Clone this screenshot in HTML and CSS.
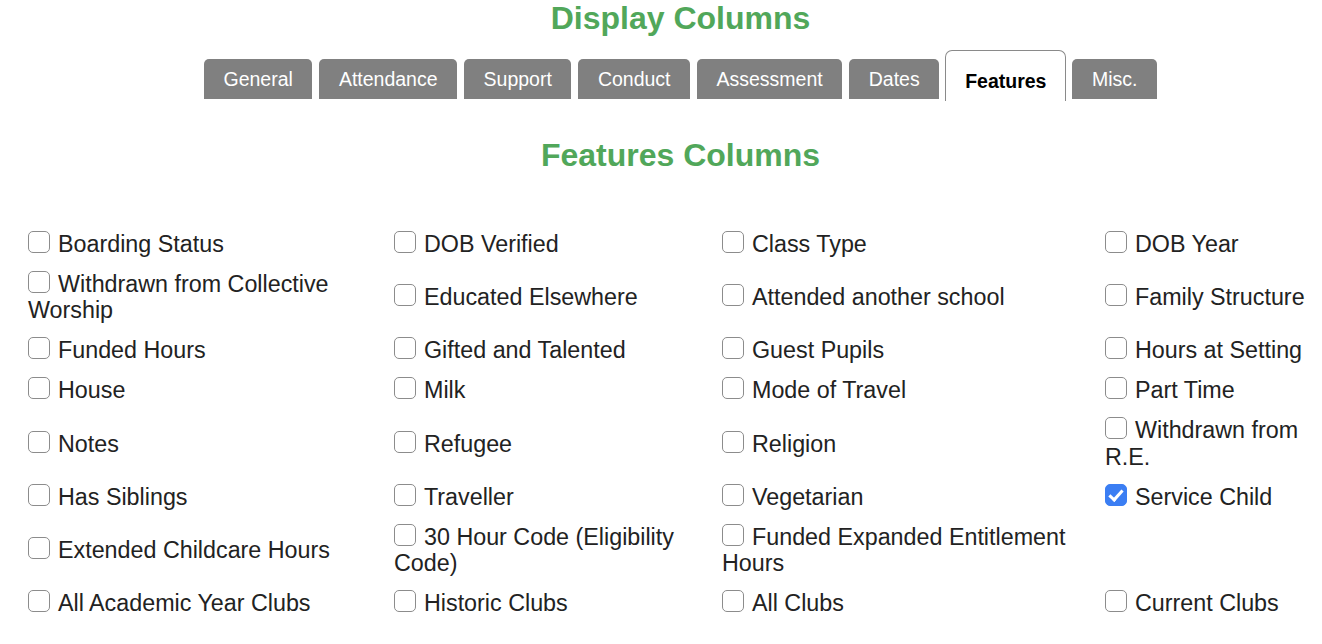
FILE: index.html
```html
<!DOCTYPE html>
<html lang="en">
<head>
<meta charset="utf-8">
<title>Display Columns</title>
<link rel="stylesheet" href="styles.css">
</head>
<body>
<div class="header">
  <h1 class="title">Display Columns</h1>
  <div class="tabs">
    <div class="tab">General</div>
    <div class="tab">Attendance</div>
    <div class="tab">Support</div>
    <div class="tab">Conduct</div>
    <div class="tab">Assessment</div>
    <div class="tab">Dates</div>
    <div class="tab active">Features</div>
    <div class="tab">Misc.</div>
  </div>
  <h2 class="title sub">Features Columns</h2>
</div>
<div class="grid">
  <label class="opt"><input type="checkbox" class="cb">Boarding Status</label>
  <label class="opt"><input type="checkbox" class="cb">DOB Verified</label>
  <label class="opt"><input type="checkbox" class="cb">Class Type</label>
  <label class="opt"><input type="checkbox" class="cb">DOB Year</label>

  <label class="opt"><input type="checkbox" class="cb">Withdrawn from Collective Worship</label>
  <label class="opt"><input type="checkbox" class="cb">Educated Elsewhere</label>
  <label class="opt"><input type="checkbox" class="cb">Attended another school</label>
  <label class="opt"><input type="checkbox" class="cb">Family Structure</label>

  <label class="opt"><input type="checkbox" class="cb">Funded Hours</label>
  <label class="opt"><input type="checkbox" class="cb">Gifted and Talented</label>
  <label class="opt"><input type="checkbox" class="cb">Guest Pupils</label>
  <label class="opt"><input type="checkbox" class="cb">Hours at Setting</label>

  <label class="opt"><input type="checkbox" class="cb">House</label>
  <label class="opt"><input type="checkbox" class="cb">Milk</label>
  <label class="opt"><input type="checkbox" class="cb">Mode of Travel</label>
  <label class="opt"><input type="checkbox" class="cb">Part Time</label>

  <label class="opt"><input type="checkbox" class="cb">Notes</label>
  <label class="opt"><input type="checkbox" class="cb">Refugee</label>
  <label class="opt"><input type="checkbox" class="cb">Religion</label>
  <label class="opt"><input type="checkbox" class="cb">Withdrawn from R.E.</label>

  <label class="opt"><input type="checkbox" class="cb">Has Siblings</label>
  <label class="opt"><input type="checkbox" class="cb">Traveller</label>
  <label class="opt"><input type="checkbox" class="cb">Vegetarian</label>
  <label class="opt"><input type="checkbox" class="cb" checked>Service Child</label>

  <label class="opt"><input type="checkbox" class="cb">Extended Childcare Hours</label>
  <label class="opt"><input type="checkbox" class="cb">30 Hour Code (Eligibility Code)</label>
  <label class="opt"><input type="checkbox" class="cb">Funded Expanded Entitlement Hours</label>
  <div class="opt empty"></div>

  <label class="opt"><input type="checkbox" class="cb">All Academic Year Clubs</label>
  <label class="opt"><input type="checkbox" class="cb">Historic Clubs</label>
  <label class="opt"><input type="checkbox" class="cb">All Clubs</label>
  <label class="opt"><input type="checkbox" class="cb">Current Clubs</label>
</div>
</body>
</html>
```
FILE: styles.css
```css
html, body {
  margin: 0;
  padding: 0;
  background: #ffffff;
}

body {
  font-family: "Liberation Sans", Arial, Helvetica, sans-serif;
  color: #222222;
}

.header {
  padding-left: 39px;
  text-align: center;
}

.title {
  margin: 0;
  font-size: 32px;
  line-height: 37px;
  font-weight: bold;
  color: #51a75a;
}

.sub {
  margin-top: 36px;
}

.tabs {
  display: flex;
  justify-content: center;
  align-items: flex-end;
  gap: 7px;
  margin-top: 13px;
  height: 51px;
}

.tab {
  background: #808080;
  color: #ffffff;
  font-size: 19.5px;
  line-height: 40px;
  height: 40px;
  padding: 0 19.5px;
  border-radius: 5px 5px 0 0;
  margin-bottom: 2px;
}

.tab.active {
  background: #ffffff;
  color: #000000;
  font-weight: bold;
  border: 1px solid #8a8a8a;
  border-bottom: none;
  border-radius: 7px 7px 0 0;
  height: 40px;
  padding: 10px 19px 0;
  margin: 0 -1px;
}

.grid {
  display: grid;
  grid-template-columns: 366px 328px 383px 1fr;
  align-items: center;
  padding: 0 8px 0 28px;
  margin-top: 50px;
}

.opt {
  display: block;
  font-size: 23.3px;
  line-height: 26.5px;
  padding: 6.75px 6px 6.75px 0;
  color: #222222;
}

.cb {
  -webkit-appearance: none;
  appearance: none;
  position: relative;
  display: inline-block;
  box-sizing: border-box;
  width: 22px;
  height: 22px;
  margin: 0 8px 0 0;
  border: 1px solid #8c8c8c;
  border-radius: 5px;
  background: #ffffff;
  vertical-align: -1px;
}

.cb:checked {
  background: #3b7ef3;
  border-color: #3b7ef3;
}

.cb:checked::after {
  content: "";
  position: absolute;
  left: 6px;
  top: 2px;
  width: 5px;
  height: 11px;
  border-right: 3px solid #ffffff;
  border-bottom: 3px solid #ffffff;
  transform: rotate(42deg);
}
```
